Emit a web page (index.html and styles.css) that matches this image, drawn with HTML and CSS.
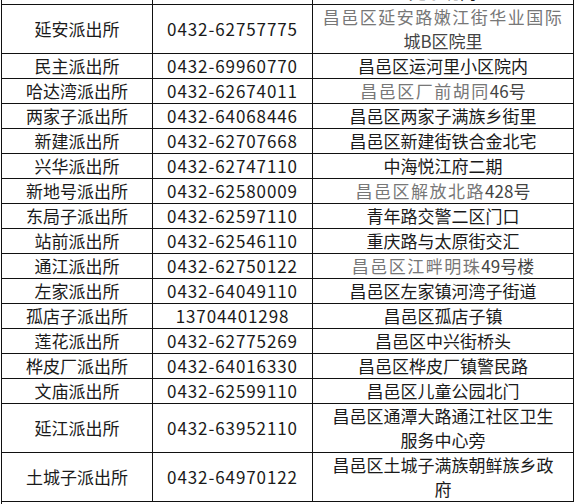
FILE: index.html
```html
<!DOCTYPE html>
<html lang="zh-CN">
<head>
<meta charset="utf-8">
<title>派出所联系方式</title>
<link rel="stylesheet" href="styles.css">
</head>
<body>
<table class="list">
  <colgroup>
    <col class="c-name">
    <col class="c-phone">
    <col class="c-addr">
  </colgroup>
  <tbody>
    <tr><td>哈达派出所</td><td class="num">0432-62437110</td><td>昌邑区吉林大街与哈达路交汇<br>处东北角</td></tr>
    <tr><td>延安派出所</td><td class="num">0432-62757775</td><td class="soft">昌邑区延安路嫩江街华业国际<br><span class="mid">城B区院里</span></td></tr>
    <tr><td>民主派出所</td><td class="num">0432-69960770</td><td>昌邑区运河里小区院内</td></tr>
    <tr><td>哈达湾派出所</td><td class="num">0432-62674011</td><td class="soft">昌邑区厂前胡同<span class="mid">46号</span></td></tr>
    <tr><td>两家子派出所</td><td class="num">0432-64068446</td><td>昌邑区两家子满族乡街里</td></tr>
    <tr><td>新建派出所</td><td class="num">0432-62707668</td><td>昌邑区新建街铁合金北宅</td></tr>
    <tr><td>兴华派出所</td><td class="num">0432-62747110</td><td>中海悦江府二期</td></tr>
    <tr><td>新地号派出所</td><td class="num">0432-62580009</td><td class="soft">昌邑区解放北路<span class="mid">428号</span></td></tr>
    <tr><td>东局子派出所</td><td class="num">0432-62597110</td><td>青年路交警二区门口</td></tr>
    <tr><td>站前派出所</td><td class="num">0432-62546110</td><td>重庆路与太原街交汇</td></tr>
    <tr><td>通江派出所</td><td class="num">0432-62750122</td><td class="soft">昌邑区江畔明珠<span class="mid">49号楼</span></td></tr>
    <tr><td>左家派出所</td><td class="num">0432-64049110</td><td>昌邑区左家镇河湾子街道</td></tr>
    <tr><td>孤店子派出所</td><td class="num">13704401298</td><td>昌邑区孤店子镇</td></tr>
    <tr><td>莲花派出所</td><td class="num">0432-62775269</td><td>昌邑区中兴街桥头</td></tr>
    <tr><td>桦皮厂派出所</td><td class="num">0432-64016330</td><td>昌邑区桦皮厂镇警民路</td></tr>
    <tr><td>文庙派出所</td><td class="num">0432-62599110</td><td>昌邑区儿童公园北门</td></tr>
    <tr><td>延江派出所</td><td class="num">0432-63952110</td><td>昌邑区通潭大路通江社区卫生<br>服务中心旁</td></tr>
    <tr><td>土城子派出所</td><td class="num">0432-64970122</td><td>昌邑区土城子满族朝鲜族乡政<br>府</td></tr>
  </tbody>
</table>
<div class="after"></div>
</body>
</html>
```

FILE: styles.css
```css
html, body {
  margin: 0;
  padding: 0;
  background: #ffffff;
}

body {
  font-family: "Noto Sans CJK SC", "Noto Sans", sans-serif;
  font-size: 17px;
  color: #1a1a1a;
  overflow: hidden;
}

.list {
  border-collapse: collapse;
  table-layout: fixed;
  width: 572px;
  margin: -45px 0 0 1px;
}

.c-name { width: 151px; }
.c-phone { width: 160px; }
.c-addr { width: 261px; }

.list td {
  border: 1px solid #111111;
  padding: 0;
  height: 24px;
  line-height: 24px;
  text-align: center;
  vertical-align: middle;
  white-space: nowrap;
}

.list td.num {
  letter-spacing: 0.9px;
}

.list td.soft {
  color: #777777;
  letter-spacing: 1.5px;
}

.list .mid {
  color: #444444;
  letter-spacing: 0;
}

.after {
  width: 0;
  height: 10px;
  margin-left: 1px;
  border-left: 1px solid #111111;
}
```
